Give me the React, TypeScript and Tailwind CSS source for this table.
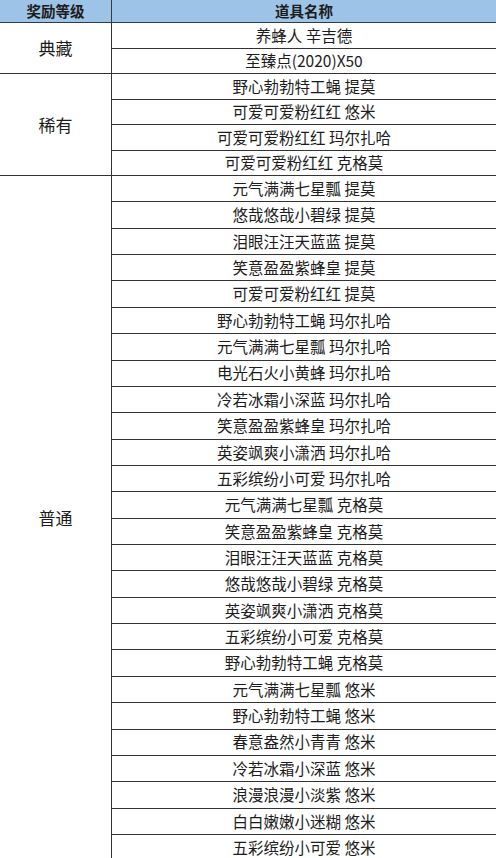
const groups: { label: string; rowH: string; items: string[] }[] = [
  {
    label: '典藏',
    rowH: 'h-[25.5px]',
    items: ['养蜂人 辛吉德', '至臻点(2020)X50'],
  },
  {
    label: '稀有',
    rowH: 'h-[25.5px]',
    items: ['野心勃勃特工蝇 提莫', '可爱可爱粉红红 悠米', '可爱可爱粉红红 玛尔扎哈', '可爱可爱粉红红 克格莫'],
  },
  {
    label: '普通',
    rowH: 'h-[26.36px]',
    items: [
      '元气满满七星瓢 提莫',
      '悠哉悠哉小碧绿 提莫',
      '泪眼汪汪天蓝蓝 提莫',
      '笑意盈盈紫蜂皇 提莫',
      '可爱可爱粉红红 提莫',
      '野心勃勃特工蝇 玛尔扎哈',
      '元气满满七星瓢 玛尔扎哈',
      '电光石火小黄蜂 玛尔扎哈',
      '冷若冰霜小深蓝 玛尔扎哈',
      '笑意盈盈紫蜂皇 玛尔扎哈',
      '英姿飒爽小潇洒 玛尔扎哈',
      '五彩缤纷小可爱 玛尔扎哈',
      '元气满满七星瓢 克格莫',
      '笑意盈盈紫蜂皇 克格莫',
      '泪眼汪汪天蓝蓝 克格莫',
      '悠哉悠哉小碧绿 克格莫',
      '英姿飒爽小潇洒 克格莫',
      '五彩缤纷小可爱 克格莫',
      '野心勃勃特工蝇 克格莫',
      '元气满满七星瓢 悠米',
      '野心勃勃特工蝇 悠米',
      '春意盎然小青青 悠米',
      '冷若冰霜小深蓝 悠米',
      '浪漫浪漫小淡紫 悠米',
      '白白嫩嫩小迷糊 悠米',
      '五彩缤纷小可爱 悠米',
    ],
  },
];

export default function App() {
  return (
    <div className="w-[496px] h-[858px] overflow-hidden bg-white text-[#1c1c1c] font-['Noto_Sans_CJK_SC',sans-serif]">
      {/* header */}
      <div className="flex h-[23px] bg-[#9dc3e6] border-b border-[#2f3b47] text-[14.5px] font-bold leading-none">
        <div className="w-[112px] flex items-center justify-center border-r border-[#2f3b47]">奖励等级</div>
        <div className="flex-1 flex items-center justify-center">道具名称</div>
      </div>

      {groups.map((g) => (
        <div key={g.label} className="flex">
          <div className="w-[112px] flex items-center justify-center border-r border-b border-[#333] text-[17px]">
            {g.label}
          </div>
          <div className="flex-1">
            {g.items.map((item, i) => (
              <div
                key={i}
                className={`${g.rowH} flex items-center justify-center border-b border-[#333] text-[15.5px] leading-none`}
              >
                {item}
              </div>
            ))}
          </div>
        </div>
      ))}
    </div>
  );
}
